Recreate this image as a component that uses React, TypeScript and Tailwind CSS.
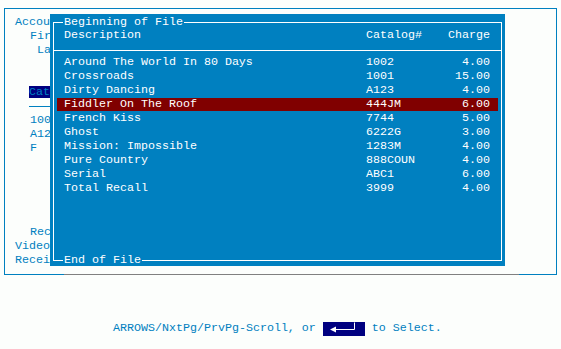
import React from "react";

const films: [string, string, string][] = [
  ["Around The World In 80 Days", "1002", "4.00"],
  ["Crossroads", "1001", "15.00"],
  ["Dirty Dancing", "A123", "4.00"],
  ["Fiddler On The Roof", "444JM", "6.00"],
  ["French Kiss", "7744", "5.00"],
  ["Ghost", "6222G", "3.00"],
  ["Mission: Impossible", "1283M", "4.00"],
  ["Pure Country", "888COUN", "4.00"],
  ["Serial", "ABC1", "6.00"],
  ["Total Recall", "3999", "4.00"],
];

const selected = 3;

function Label({ text, indent }: { text: string; indent: string }) {
  return <div className={`h-[14px] leading-[14px] whitespace-pre ${indent}`}>{text}</div>;
}

function EnterKey() {
  return (
    <span className="inline-flex w-[42px] h-[14px] bg-[#000080]">
      <svg width="42" height="14" viewBox="0 0 42 14">
        <path d="M12 7.5H31.5V0.5" fill="none" stroke="#fff" strokeWidth="1" />
        <polygon points="7,7.5 13,4.5 13,10.5" fill="#fff" />
      </svg>
    </span>
  );
}

export default function App() {
  return (
    <div className="relative w-[561px] h-[349px] bg-[#fcfefc] overflow-hidden font-['Liberation_Mono',monospace] text-[11.67px] text-[#0080c0]">
      {/* background entry form, only its left edge shows beside the popup */}
      <div className="ml-[4px] mt-[8px] w-[553px] border-l border-t border-r border-[#0080c0] pt-[6px] pb-[7px]">
        <div className="w-[45px] overflow-hidden">
          <Label text="Accou" indent="pl-[10px]" />
          <Label text="Fir" indent="pl-[25px]" />
          <Label text="La" indent="pl-[32px]" />
          <Label text="" indent="" />
          <Label text="" indent="" />
          <div className="h-[14px] pl-[24px] flex items-center">
            <span className="bg-[#000080] h-[12px] leading-[12px] w-[30px] whitespace-pre">Cat</span>
          </div>
          <div className="h-[14px] pl-[24px] flex items-center">
            <div className="w-[30px] h-px bg-[#0080c0]" />
          </div>
          <Label text="100" indent="pl-[25px]" />
          <Label text="A12" indent="pl-[25px]" />
          <Label text="F" indent="pl-[25px]" />
          <Label text="" indent="" />
          <Label text="" indent="" />
          <Label text="" indent="" />
          <Label text="" indent="" />
          <Label text="" indent="" />
          <Label text="Rec" indent="pl-[25px]" />
          <Label text="Video" indent="pl-[10px]" />
          <Label text="Recei" indent="pl-[10px]" />
        </div>
      </div>
      <div className="ml-[4px] w-[553px] h-px flex">
        <div className="w-[60px] bg-[#0080c0]" />
        <div className="w-[455px] bg-[#808080]" />
        <div className="flex-1 bg-[#0080c0]" />
      </div>

      {/* status line */}
      <div className="mt-[47px] h-[14px] pl-[113px] flex items-center whitespace-pre">
        <span>ARROWS/NxtPg/PrvPg-Scroll, or </span>
        <EnterKey />
        <span> to Select.</span>
      </div>

      {/* lookup popup */}
      <div className="absolute left-[50px] top-[14px] w-[455px] h-[252px] bg-[#0080c0] pt-[8px] pl-[3px] pr-[3px] text-white">
        <div className="relative h-[239px] border border-white">
          <span className="absolute left-[9px] top-[-7px] bg-[#0080c0] px-[1px] leading-[12px]">Beginning of File</span>
          <span className="absolute left-[9px] bottom-[-6px] bg-[#0080c0] px-[1px] leading-[12px]">End of File</span>

          <div className="pt-[5px] pl-[3px] pr-[3px]">
            <div className="h-[14px] leading-[14px] flex">
              <span className="w-[309px] pl-[7px]">Description</span>
              <span className="flex-1">Catalog#</span>
              <span className="pr-[8px]">Charge</span>
            </div>
          </div>
          <div className="mt-[8px] h-px bg-white" />

          <div className="mt-[5px] pl-[3px] pr-[3px]">
            {films.map(([title, code, charge], i) => (
              <div
                key={code}
                className={`mt-[1px] h-[13px] leading-[13px] flex whitespace-pre ${i === selected ? "bg-[#800000]" : ""}`}
              >
                <span className="w-[309px] pl-[7px]">{title}</span>
                <span className="flex-1">{code}</span>
                <span className="pr-[8px] text-right">{charge}</span>
              </div>
            ))}
          </div>
        </div>
      </div>
    </div>
  );
}
